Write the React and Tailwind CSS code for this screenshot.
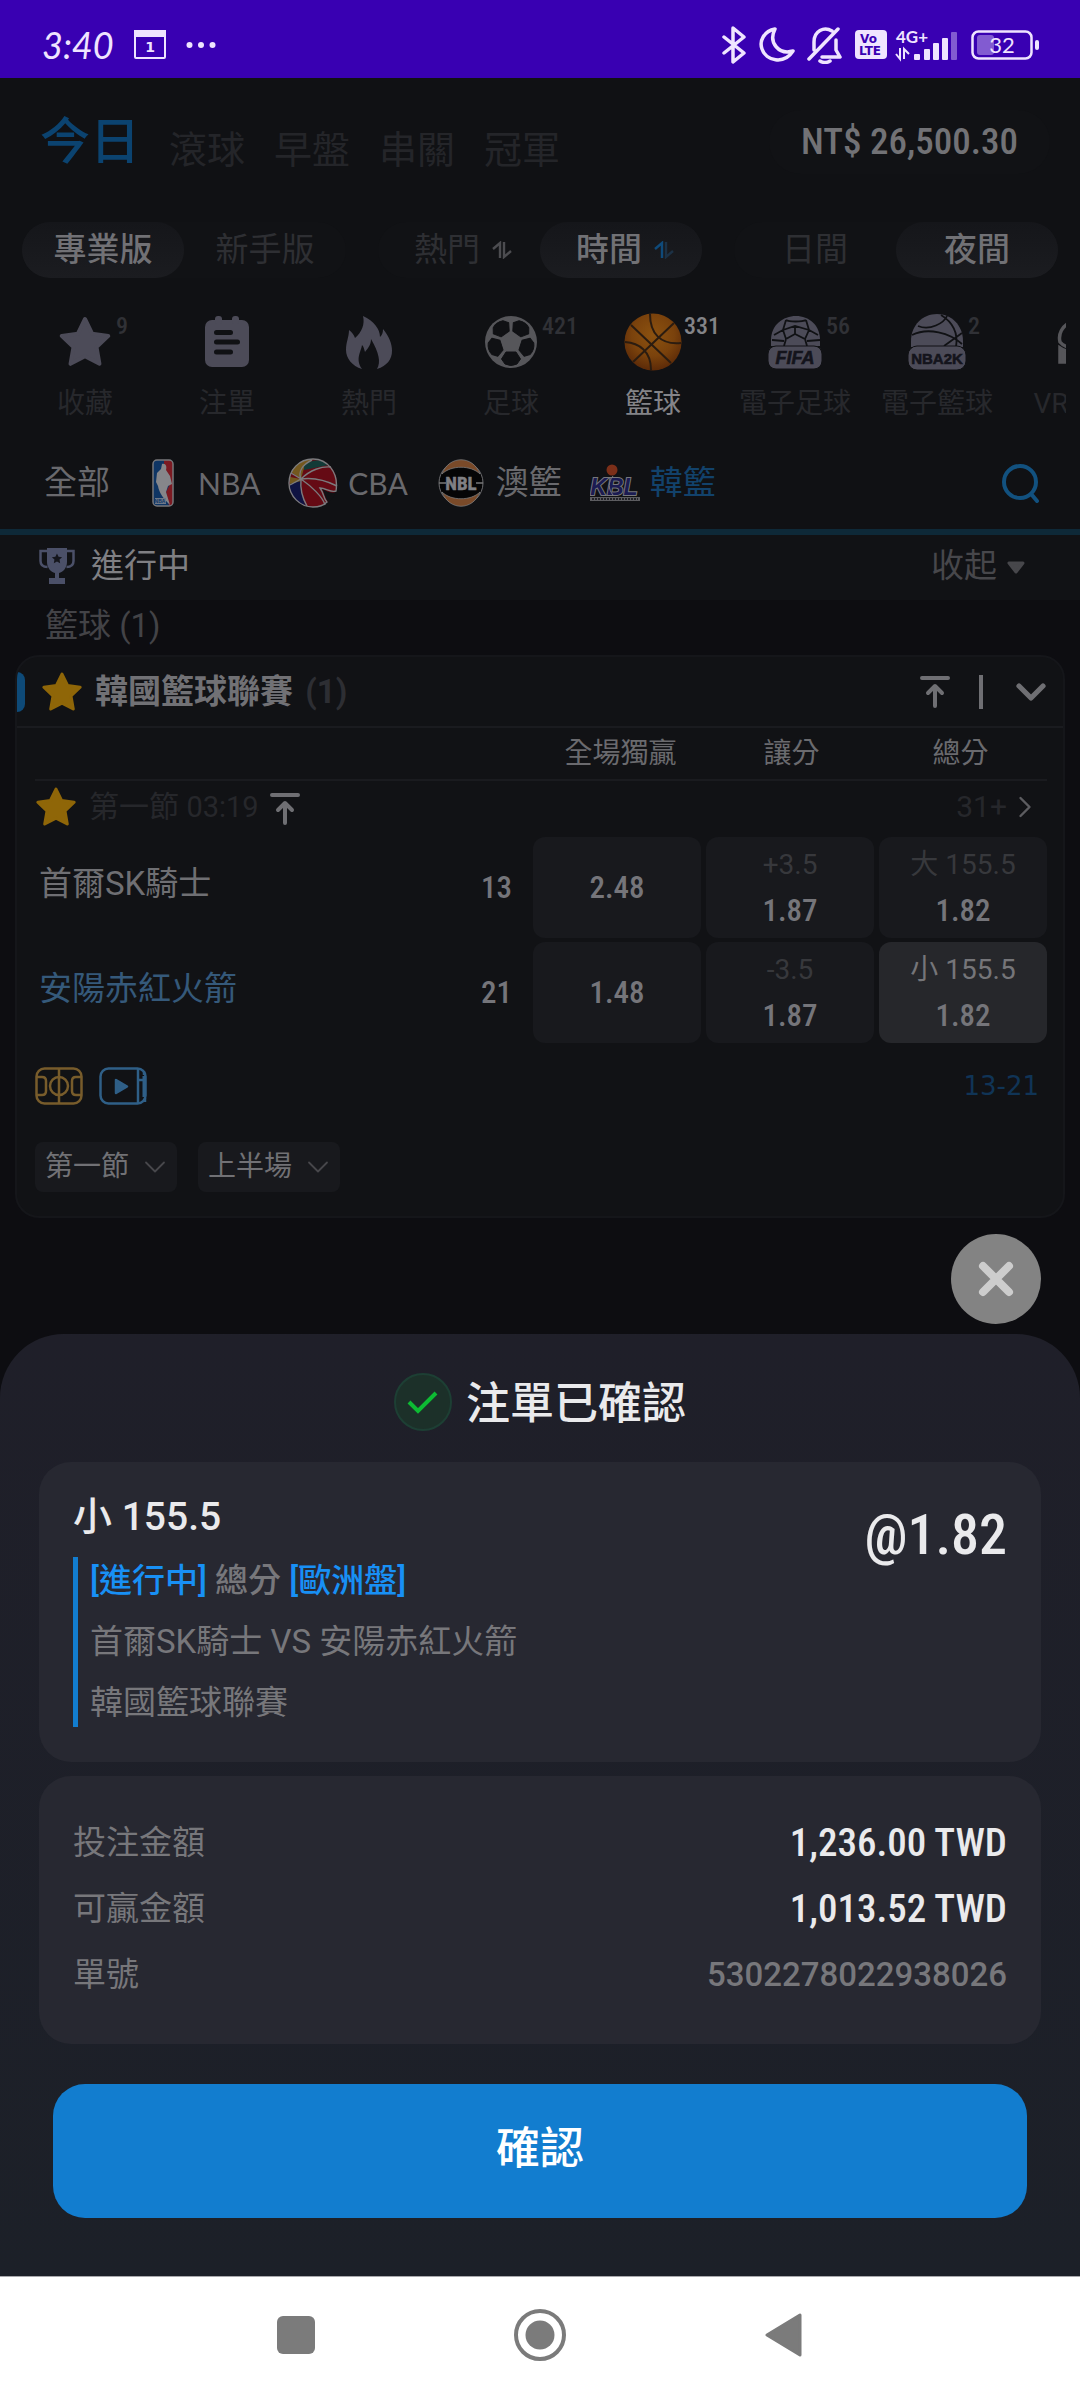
import React, { useState } from 'react';
import { ChevronDown, ChevronRight } from 'lucide-react';

const STAR = 'M12 2.6l2.9 6 6.6.9-4.8 4.6 1.2 6.8L12 17.8l-5.9 3.1 1.2-6.8L2.5 9.5l6.6-.9z';

const StarIcon = ({ className }) => (
  <svg viewBox="1 1 22 22" className={className} fill="currentColor" stroke="currentColor" strokeWidth="1.6" strokeLinejoin="round">
    <path d={STAR} />
  </svg>
);

const TopIcon = ({ className }) => (
  <svg viewBox="0 0 32 34" className={className} fill="none" stroke="currentColor" strokeWidth="4" strokeLinecap="round" strokeLinejoin="round">
    <path d="M3 3h26M16 31V12M9 18l7-7 7 7" />
  </svg>
);

const SortIcon = ({ up, down }) => (
  <svg viewBox="0 0 20 18" className="w-5 h-[18px]" fill="none" strokeWidth="2.4">
    <path d="M1 8l7-6v15" stroke={up} />
    <path d="M12 1v15l7-6" stroke={down} />
  </svg>
);

const ClipboardIcon = () => (
  <svg viewBox="0 0 44 52" className="w-[44px] h-[52px]">
    <rect x="0" y="4" width="44" height="47" rx="7" fill="#4c4b58" />
    <rect x="10" y="0" width="7" height="8" rx="3" fill="#4c4b58" />
    <rect x="27" y="0" width="7" height="8" rx="3" fill="#4c4b58" />
    <path d="M11.500 16.500h14M11.500 26h21M11.500 36h14" stroke="#101114" strokeWidth="5" strokeLinecap="round" />
  </svg>
);

const FlameIcon = () => (
  <svg viewBox="0 0 46 53" className="w-[46px] h-[53px]">
    <path
      d="M17 0C28 5 34 13 34 21C36 19 37 17 37 13C43 20 46 28 46 35C46 43 41 50 31 53C35 46 33 37 25 23C25 29 22 32 19 36C18 33 18 31 16 29C15 36 9 43 16 53C6 50 0 42 0 34C0 26 3 21 3 14C6 16 8 19 9 22C16 16 19 8 17 0Z"
      fill="#4c4b58"
    />
  </svg>
);

const SoccerIcon = () => (
  <svg viewBox="0 0 54 54" className="w-[54px] h-[54px]">
    <circle cx="27" cy="27" r="26" fill="#56565a" />
    {[0, 72, 144, 216, 288].map(angle => (
      <path key={angle} d="M22 37h10l4.500 7-3.500 5q-6 3-12 0l-3.500-5z" fill="#101114" stroke="#101114" strokeLinejoin="round" transform={`rotate(${angle} 27 27)`} />
    ))}
  </svg>
);

const BasketballIcon = () => (
  <svg viewBox="0 0 58 58" className="w-[58px] h-[58px]">
    <defs>
      <radialGradient id="ball" cx="50%" cy="38%" r="62%">
        <stop offset="0" stopColor="#8c5210" />
        <stop offset="0.6" stopColor="#7a420c" />
        <stop offset="1" stopColor="#5c2a08" />
      </radialGradient>
    </defs>
    <circle cx="29" cy="29" r="28.500" fill="url(#ball)" />
    <g fill="none" stroke="#2b1c10" strokeWidth="2">
      <path d="M7 12L47 50M50 10L9 49M26 1C26 20 36 32 57 30M1 29C15 30 27 38 27 57" />
    </g>
  </svg>
);

const FifaIcon = () => (
  <svg viewBox="0 0 54 55" className="w-[54px] h-[55px]">
    <path d="M3 31V25C3 10 15 1 28 1S52 10 52 25v6z" fill="#4c4b58" />
    <g fill="none" stroke="#101114" strokeWidth="1.8">
      <path d="M18 5c3 2 16 2 20 0M18 5l-3 10-9 5M38 5l3 10 9 5M15 15l12-4 14 4M27 11v8M15 15l3 9 9-5 10 5 4-9M18 24l-2 7M37 24l2 7M4 25l12 1M52 25l-13 1" />
    </g>
    <rect x="0" y="31" width="54" height="23" rx="8" fill="#4c4b58" stroke="#101114" />
    <text x="27" y="49" textAnchor="middle" className="font-['Liberation_Sans'] font-bold italic text-[18px]" fill="#14141c" stroke="#14141c" strokeWidth="0.6">FIFA</text>
  </svg>
);

const Nba2kIcon = () => (
  <svg viewBox="0 0 58 58" className="w-[58px] h-[58px]">
    <path d="M3 34V28C3 12 15 1 29 1S55 12 55 28v6z" fill="#4c4b58" />
    <g fill="none" stroke="#101114" strokeWidth="1.8">
      <path d="M10 13C22 18 36 10 39 3M4 22C20 14 42 20 54 31M33 2C46 10 50 22 48 34M36 33L54 20" />
    </g>
    <rect x="0" y="33" width="58" height="24" rx="9" fill="#4c4b58" stroke="#101114" />
    <text x="29" y="51" textAnchor="middle" className="font-['Liberation_Sans'] font-bold text-[15px]" fill="#14141c" stroke="#14141c" strokeWidth="0.6">NBA2K</text>
  </svg>
);

const VrIcon = () => (
  <svg viewBox="0 0 44 44" className="w-[44px] h-[44px]" fill="none" stroke="#56565a" strokeWidth="3.500">
    <path d="M14 2C5 6 1 14 3 22c4 5 12 7 19 6M14 2h16M18 12c-6-2-9 6-4 10" />
    <path d="M3 28c6 4 12 5 19 5h19v9H3z" fill="#56565a" />
  </svg>
);

const NbaLogo = () => (
  <svg viewBox="0 0 22 48" className="w-[22px] h-[48px]">
    <rect x="1" y="1" width="20" height="46" rx="4" fill="#0f3564" />
    <path d="M12 1h5q4 0 4 4v38q0 4-4 4l-3-14 4-8-6-14z" fill="#7c1a22" />
    <path d="M10 5c4-1 5 3 4 6l4 6 2 8-4 2-2 6 4 13C12 40 7 34 6 27L4 23l1-9 4-4z" fill="#86868a" />
    <rect x="1" y="1" width="20" height="46" rx="4" fill="none" stroke="#77777a" strokeWidth="1.500" />
    <rect x="3" y="39" width="11" height="6" fill="#6d7888" />
    <text x="8" y="44" textAnchor="middle" className="font-['Liberation_Sans'] font-bold text-[5px]" fill="#0f3564">NBA</text>
  </svg>
);

const CbaLogo = () => (
  <svg viewBox="0 0 50 50" className="w-[50px] h-[50px]">
    <circle cx="25" cy="25" r="24" fill="#650a14" />
    <path d="M13 21L3 14C8 5 16 1 25 1l-9 9z" fill="#73581f" />
    <path d="M16 8C22 1 34 0 41 7L16 12z" fill="#123a37" />
    <path d="M2 19l11 2-1 8-10 2z" fill="#73581f" />
    <path d="M2 26l11-3c0 12 2 19 5 25C7 44 1 37 2 26z" fill="#0f1342" />
    <g fill="none" stroke="#7b7b7e" strokeWidth="1.4">
      <path d="M13 21C22 12 34 8 43 9M13 21c14-2 26 2 36 7M13 21c10 7 22 18 24 26M13 21c-1 10 2 20 6 27M13 21L3 15M13 21C10 14 14 7 24 2M2 27l11-6" />
      <path d="M32 30c6 0 11 5 16 3C51 14 39 1 25 1 11 1 1 12 1 25s11 24 24 24c6 0 11-2 14-5-4-4-2-7-7-14z" />
    </g>
    <path d="M34 31c5 2 9 5 14 3-2 5-5 8-8 10-3-4-3-8-6-13z" fill="#101114" />
  </svg>
);

const NblLogo = () => (
  <svg viewBox="0 0 46 48" className="w-[46px] h-[48px]">
    <circle cx="23" cy="24" r="22" fill="#050506" stroke="#6d6d70" />
    <path d="M4 15C11 -4 35 -4 42 15C33 6 13 6 4 15zM4 33c7 19 31 19 38 0-9 9-29 9-38 0z" fill="#7a4a29" stroke="#78787a" strokeWidth="0.8" />
    <path d="M1 24h7M38 24h7" stroke="#78787a" strokeWidth="1.5" />
    <text x="23" y="31" textAnchor="middle" className="font-['Roboto_Condensed','Roboto'] font-bold text-[19px]" fill="#808084" stroke="#808084" strokeWidth="0.5">NBL</text>
  </svg>
);

const KblLogo = () => (
  <svg viewBox="0 0 50 38" className="w-[50px] h-[38px]">
    <text x="24" y="31" textAnchor="middle" className="font-['Liberation_Sans'] font-bold italic text-[23px]" fill="#1b1b52" stroke="#77777c" strokeWidth="2" paintOrder="stroke">KBL</text>
    <path d="M23 12c-5 6-5 13 0 19" fill="none" stroke="#7a7a7e" />
    <circle cx="22" cy="6" r="5.500" fill="#7c2f19" />
    <rect x="0" y="33" width="50" height="4" fill="#5c5c60" />
    <path d="M2 35h46" stroke="#222228" strokeWidth="2" strokeDasharray="2 1" />
  </svg>
);

const TrophyIcon = () => (
  <svg viewBox="0 0 36 38" className="w-9 h-[38px]">
    <path d="M8 1h20v14c0 6-4 10-8 11v5h6v6H10v-6h6v-5c-4-1-8-5-8-11z" fill="#4b5068" />
    <path d="M8 4H1.500v10c0 4 3 6 7 6M28 4h6.500v10c0 4-3 6-7 6" fill="none" stroke="#4b5068" strokeWidth="2.5" />
    <path d={STAR} transform="translate(11.500 5) scale(0.54)" fill="#15161c" />
  </svg>
);

const StatusBar = () => (
  <div className="flex items-center justify-between h-[78px] pt-3 pl-[42px] pr-[41px] bg-[#3900b2] text-[#efe4ff]">
    <div className="flex items-center gap-5">
      <span className="font-['Lato',sans-serif] italic text-[36px] leading-10">3:40</span>
      <svg viewBox="0 0 32 30" className="w-8 h-[30px]">
        <rect x="1" y="1" width="30" height="27" rx="1" fill="none" stroke="currentColor" strokeWidth="2" />
        <rect x="0" y="0" width="32" height="7" fill="currentColor" />
        <text x="16" y="22" textAnchor="middle" className="font-['DejaVu_Sans'] font-bold text-[14px]" fill="currentColor">1</text>
      </svg>
      <svg viewBox="0 0 30 8" className="w-[30px] h-2" fill="currentColor">
        <circle cx="3.500" cy="4" r="3" />
        <circle cx="15" cy="4" r="3" />
        <circle cx="26.500" cy="4" r="3" />
      </svg>
    </div>
    <div className="flex items-center gap-3">
      <svg viewBox="0 0 26 38" className="w-[26px] h-[38px]" fill="none" stroke="currentColor" strokeWidth="3.500" strokeLinejoin="round" strokeLinecap="round">
        <path d="M3 11l20 16-11 9V2l11 9L3 27" />
      </svg>
      <svg viewBox="0 0 36 36" className="w-9 h-9" fill="none" stroke="currentColor" strokeWidth="3.500" strokeLinejoin="round">
        <path d="M16 2C5 4 0 14 3 22c4 12 22 16 31 2C20 28 9 16 16 2z" />
      </svg>
      <svg viewBox="0 0 36 38" className="w-9 h-[38px]" fill="none" stroke="currentColor" strokeWidth="3.500" strokeLinecap="round" strokeLinejoin="round">
        <path d="M2 33L31 3M7 24V16C7 5 17 0 25 5M29 14v10l4 7H15" />
        <path d="M13 35q5 3 10 0" />
      </svg>
      <svg viewBox="0 0 32 30" className="w-8 h-[30px]">
        <rect width="32" height="29" rx="4" fill="currentColor" />
        <g className="font-['DejaVu_Sans'] font-bold text-[12px]" fill="#3900b2">
          <text x="5" y="13">Vo</text>
          <text x="4" y="25">LTE</text>
        </g>
      </svg>
      <svg viewBox="0 0 64 40" className="w-16 h-10 -ml-1" fill="currentColor">
        <text x="1" y="18" className="font-['Lato'] font-bold text-[17px]">4G+</text>
        <path d="M5 23v11l-4-5M9 34V24l5 5" fill="none" stroke="currentColor" strokeWidth="2" />
        <rect x="19" y="29" width="6" height="6" rx="1" />
        <rect x="29" y="24" width="6" height="11" rx="1" />
        <rect x="38" y="18" width="6" height="17" rx="1" />
        <rect x="47" y="13" width="6" height="22" rx="1" />
        <rect x="56" y="7" width="6" height="28" rx="1" opacity="0.4" />
      </svg>
      <svg viewBox="0 0 68 30" className="w-[68px] h-[30px]">
        <rect x="1.500" y="1.500" width="59" height="27" rx="6" fill="none" stroke="currentColor" strokeWidth="2.500" />
        <rect x="6" y="5" width="17" height="20" rx="3" fill="currentColor" opacity="0.4" />
        <rect x="64" y="10" width="4" height="10" rx="2" fill="currentColor" />
        <text x="31" y="23" textAnchor="middle" className="font-['Lato'] text-[22px]" fill="currentColor">32</text>
      </svg>
    </div>
  </div>
);

const Segment = ({ options, value, onChange }) => (
  <div className="flex flex-1 h-14 rounded-full bg-[#111215]">
    {options.map(option => (
      <button
        key={option.label}
        onClick={() => onChange(option.label)}
        className={`flex flex-1 items-center justify-center gap-3 rounded-full text-[33px] leading-10 ${option.icon ? 'pl-2' : ''} ${
          value === option.label ? 'bg-linear-to-b from-[#15161a] to-[#1b1c20] text-[#717175] font-medium' : 'text-[#2e2f33]'
        }`}
      >
        {option.label}
        {option.icon}
      </button>
    ))}
  </div>
);

const days = ['今日', '滾球', '早盤', '串關', '冠軍'];

const sports = [
  { name: '收藏', count: 9, icon: <StarIcon className="w-[54px] h-[54px] text-[#4c4b58]" /> },
  { name: '注單', icon: <ClipboardIcon /> },
  { name: '熱門', icon: <FlameIcon /> },
  { name: '足球', count: 421, icon: <SoccerIcon /> },
  { name: '籃球', count: 331, icon: <BasketballIcon /> },
  { name: '電子足球', count: 56, icon: <FifaIcon /> },
  { name: '電子籃球', count: 2, icon: <Nba2kIcon /> },
  { name: 'VR足球', icon: <VrIcon /> },
];

const leagues = [
  { name: '全部' },
  { name: 'NBA', logo: <NbaLogo /> },
  { name: 'CBA', logo: <CbaLogo /> },
  { name: '澳籃', logo: <NblLogo /> },
  { name: '韓籃', logo: <KblLogo /> },
];

const teams = [
  { name: '首爾SK騎士', score: 13, odds: [{ price: '2.48' }, { line: '+3.5', price: '1.87' }, { line: '大 155.5', price: '1.82' }] },
  { name: '安陽赤紅火箭', score: 21, odds: [{ price: '1.48' }, { line: '-3.5', price: '1.87' }, { line: '小 155.5', price: '1.82', picked: true }] },
];

const NARROW = "font-['Roboto_Condensed','Liberation_Sans_Narrow','Roboto',sans-serif] font-medium";

const Header = () => {
  const [day, setDay] = useState('今日');
  const [version, setVersion] = useState('專業版');
  const [sort, setSort] = useState('時間');
  const [theme, setTheme] = useState('夜間');
  const [sport, setSport] = useState('籃球');
  const [league, setLeague] = useState('韓籃');

  return (
    <header className="bg-[#101114] border-b-[6px] border-[#0e2938]">
      <div className="flex items-center justify-between h-32 pl-10 pr-[30px]">
        <nav className="flex items-end gap-[29px]">
          {days.map(d => (
            <button
              key={d}
              onClick={() => setDay(d)}
              className={day === d ? 'text-[50px] leading-[60px] font-medium text-[#0b4370]' : 'text-[38px] leading-[44px] text-[#242529]'}
            >
              {d}
            </button>
          ))}
        </nav>
        <div className={`px-8 rounded-full bg-[#111215] text-[37px] leading-[64px] text-[#727276] ${NARROW}`}>
          NT$ 26,500.30
        </div>
      </div>

      <div className="flex gap-8 mt-4 px-[22px]">
        <Segment value={version} onChange={setVersion} options={[{ label: '專業版' }, { label: '新手版' }]} />
        <Segment
          value={sort}
          onChange={setSort}
          options={[
            { label: '熱門', icon: <SortIcon up="#4c4c50" down="#4c4c50" /> },
            { label: '時間', icon: <SortIcon up="#0f4a7a" down="#1c3145" /> },
          ]}
        />
        <Segment value={theme} onChange={setTheme} options={[{ label: '日間' }, { label: '夜間' }]} />
      </div>

      {/* Sports */}
      <div className="flex mx-[14px] mt-8 overflow-hidden">
        {sports.map(s => (
          <button
            key={s.name}
            onClick={() => setSport(s.name)}
            className={`relative flex flex-col items-center shrink-0 w-[142px] ${sport === s.name ? 'text-[#848488]' : 'text-[#27282c]'}`}
          >
            <span className="flex items-center justify-center h-16">{s.icon}</span>
            {s.count && (
              <span className={`absolute left-[102px] top-[2px] text-[24px] leading-7 ${NARROW} ${sport === s.name ? '' : 'text-[#303136]'}`}>
                {s.count}
              </span>
            )}
            <span className="mt-[10px] text-[28px] leading-10 whitespace-nowrap">{s.name}</span>
          </button>
        ))}
      </div>

      {/* Leagues */}
      <div className="flex items-center justify-between h-[88px] mt-[17px] pb-1 pl-11 pr-10">
        <nav className="flex items-center gap-7">
          {leagues.map(l => (
            <button
              key={l.name}
              onClick={() => setLeague(l.name)}
              className={`flex items-center gap-[10px] text-[33px] leading-10 ${league === l.name ? 'text-[#12426b]' : 'text-[#69696d]'}`}
            >
              {l.logo && <span className="flex justify-center w-[50px]">{l.logo}</span>}
              {l.name.endsWith('BA') ? <span className="font-['Lato',sans-serif] text-[30px]">{l.name}</span> : l.name}
            </button>
          ))}
        </nav>
        <button aria-label="search">
          <svg viewBox="0 0 38 40" className="w-[38px] h-10" fill="none" stroke="#12517f" strokeWidth="4" strokeLinecap="round">
            <circle cx="18" cy="19" r="16" />
            <path d="M30 32l5 6" />
          </svg>
        </button>
      </div>
    </header>
  );
};

const OddsButton = ({ odd }) => (
  <button
    className={`flex flex-col items-center justify-center gap-[10px] w-full h-[101px] rounded-xl ${
      odd.picked ? 'bg-[#26272b]' : 'bg-[#18191d]'
    }`}
  >
    {odd.line && (
      <span className={`text-[28px] leading-9 ${odd.picked ? 'text-[#757579]' : 'text-[#37383c]'}`}>{odd.line}</span>
    )}
    <span className={`text-[31px] leading-9 text-[#75757a] ${NARROW}`}>{odd.price}</span>
  </button>
);

const MatchCard = () => (
  <section className="mx-[15px] border-2 border-[#15161a] rounded-3xl bg-[#111215] overflow-hidden">
    <div className="flex items-center h-[71px] pr-2 border-b-2 border-[#1a1b1f]">
      <span className="w-2 h-10 rounded-r-lg bg-[#0e4a78]" />
      <StarIcon className="ml-4 w-[42px] h-[42px] text-[#8f6608]" />
      <h2 className="ml-3 text-[33px] leading-10 font-bold text-[#717175]">
        韓國籃球聯賽 <span className="ml-1 text-[#2d2e33]">(1)</span>
      </h2>
      <div className="flex items-center ml-auto text-[#6f6f73]">
        <button aria-label="top"><TopIcon className="w-8 h-[34px]" /></button>
        <span className="ml-7 w-1 h-[34px] bg-current" />
        <button aria-label="collapse" className="ml-6"><ChevronDown className="w-12 h-12" strokeWidth="2.6" /></button>
      </div>
    </div>

    <div className="pl-[18px] pr-4">
      <table className="w-full table-fixed border-collapse">
        <colgroup>
          <col />
          <col className="w-[80px]" />
          <col className="w-[173px]" />
          <col className="w-[173px]" />
          <col className="w-[173px]" />
        </colgroup>
        <thead>
          <tr className="h-[52px] border-b-2 border-[#1a1b1f] text-[28px] leading-9 text-[#6a6a6e]">
            <th colSpan="2" />
            <th className="font-normal pl-3">全場獨贏</th>
            <th className="font-normal pl-2">讓分</th>
            <th className="font-normal">總分</th>
          </tr>
        </thead>
        <tbody>
          <tr>
            <td colSpan="5" className="p-0">
              <div className="flex items-center h-14 pb-1 text-[30px] leading-9 text-[#26272b]">
                <StarIcon className="w-[42px] h-[42px] text-[#8f6608]" />
                <span className="ml-3">第一節 <span className="text-[29px]">03:19</span></span>
                <TopIcon className="ml-[10px] mt-1 w-8 h-[34px] text-[#6f6f73]" />
                <button className="flex items-center ml-auto mr-1">
                  31+
                  <ChevronRight className="w-9 h-9 text-[#5c5c60]" strokeWidth="1.6" />
                </button>
              </div>
            </td>
          </tr>
          {teams.map((team, i) => (
            <tr key={team.name}>
              <th className={`pl-1 pb-3 text-left font-normal text-[33px] leading-10 ${i === 1 ? 'text-[#35597a]' : 'text-[#6f6f73]'}`}>{team.name}</th>
              <td className={`pr-4 pb-1 text-right text-[31px] leading-10 text-[#75757a] ${NARROW}`}>{team.score}</td>
              {team.odds.map((odd, j) => (
                <td key={j} className="p-0 pl-[5px] pb-1">
                  <OddsButton odd={odd} />
                </td>
              ))}
            </tr>
          ))}
        </tbody>
      </table>

      <div className="flex items-center gap-4 mt-5">
        <svg viewBox="0 0 48 38" className="w-12 h-[38px]" fill="none" stroke="#785c2b" strokeWidth="2.500">
          <rect x="1.500" y="1.500" width="45" height="35" rx="8" />
          <circle cx="24" cy="19" r="9" />
          <path d="M24 1v36M2 10h5q4 0 4 4v10q0 4-4 4H2M46 10h-5q-4 0-4 4v10q0 4 4 4h5" />
        </svg>
        <svg viewBox="0 0 48 38" className="w-12 h-[38px]" fill="none" stroke="#2f5f87" strokeWidth="2.500">
          <rect x="1.500" y="1.500" width="45" height="35" rx="8" />
          <path d="M39 2v34M46 13h-7M45 4v4M46 31v4" />
          <path d="M45 9v21" strokeWidth="3" />
          <path d="M17 13v13l11-6.500z" fill="#2f5f87" strokeLinejoin="round" />
        </svg>
        <span className="ml-auto mr-2 font-['DejaVu_Sans',sans-serif] text-[26px] leading-9 text-[#103456]">13-21</span>
      </div>

      <div className="flex gap-[21px] mt-[37px] mb-6">
        {['第一節', '上半場'].map(part => (
          <button key={part} className="flex items-center gap-2 h-[50px] pl-[10px] pr-1 rounded-lg bg-[#18191d] text-[28px] leading-9 text-[#717175]">
            {part}
            <ChevronDown className="w-9 h-9 text-[#47474b]" strokeWidth="1.2" />
          </button>
        ))}
      </div>
    </div>
  </section>
);

const BetSlip = () => (
  <section className="flex flex-col flex-1 px-[39px] rounded-t-[64px] bg-linear-to-b from-[#1f1f29] to-[#1c2028]">
    <div className="flex items-center justify-center gap-[14px] h-32 pt-2">
      <svg viewBox="0 0 58 58" className="w-[58px] h-[58px]">
        <circle cx="29" cy="29" r="28" fill="#1c3029" stroke="#1d3f34" strokeWidth="2" />
        <path d="M15 29l9 9 18-18" fill="none" stroke="#0dbb33" strokeWidth="4" />
      </svg>
      <h1 className="pt-1 text-[44px] leading-[56px] font-medium text-[#eaeaec]">注單已確認</h1>
    </div>

    <div className="flex items-start justify-between h-[300px] px-[34px] pt-[29px] rounded-[32px] bg-[#272831]">
      <div>
        <p className="text-[39px] leading-[52px] font-medium text-[#eaeaec]">小 155.5</p>
        <div className="flex flex-col gap-[13px] mt-[14px] pl-3 border-l-[5px] border-[#127dcf] text-[33px] leading-[48px] text-[#77777b]">
          <p className="font-medium">
            <span className="text-[#1890f5]">[進行中]</span> 總分 <span className="text-[#1890f5]">[歐洲盤]</span>
          </p>
          <p>首爾SK騎士 VS 安陽赤紅火箭</p>
          <p>韓國籃球聯賽</p>
        </div>
      </div>
      <p className={`mt-2 text-[56px] leading-[72px] text-[#eaeaec] ${NARROW}`}>@1.82</p>
    </div>

    <dl className="flex flex-col gap-[18px] h-[268px] mt-[14px] px-[34px] pt-[43px] rounded-[32px] bg-[#272831] text-[33px] leading-[48px] text-[#77777b]">
      <div className="flex items-center justify-between">
        <dt>投注金額</dt>
        <dd className={`text-[39px] text-[#eaeaec] ${NARROW}`}>1,236.00 TWD</dd>
      </div>
      <div className="flex items-center justify-between">
        <dt>可贏金額</dt>
        <dd className={`text-[39px] text-[#eaeaec] ${NARROW}`}>1,013.52 TWD</dd>
      </div>
      <div className="flex items-center justify-between">
        <dt>單號</dt>
        <dd className="font-medium">5302278022938026</dd>
      </div>
    </dl>

    <button className="h-[134px] mx-[14px] mt-10 mb-[58px] pb-1 rounded-[32px] bg-[#127dcf] text-[44px] leading-[56px] font-medium text-white">
      確認
    </button>
  </section>
);

const NavBar = () => (
  <nav className="flex items-center justify-around h-[126px] px-[178px] pb-[10px] border-t border-[#a8a8ac] bg-white">
    <button aria-label="recent" className="w-[38px] h-[38px] rounded-md bg-[#7b7b7b]" />
    <button aria-label="home">
      <svg viewBox="0 0 52 52" className="w-[52px] h-[52px]">
        <circle cx="26" cy="26" r="24" fill="none" stroke="#7b7b7b" strokeWidth="4" />
        <circle cx="26" cy="26" r="14.500" fill="#7b7b7b" />
      </svg>
    </button>
    <button aria-label="back">
      <svg viewBox="0 0 38 44" className="w-[38px] h-11">
        <path d="M35 2v40L2 22z" fill="#7b7b7b" stroke="#7b7b7b" strokeWidth="3" strokeLinejoin="round" />
      </svg>
    </button>
  </nav>
);

export default function App() {
  return (
    <div className="flex flex-col min-h-screen bg-[#0d0d11] font-['Roboto','Noto_Sans_CJK_TC',sans-serif]">
      <StatusBar />
      <Header />
      <div className="flex items-center h-[65px] pl-[39px] pr-[55px] pb-1 bg-[#111215] text-[33px] leading-10">
        <TrophyIcon />
        <span className="ml-4 text-[#7f7f83]">進行中</span>
        <button className="flex items-center gap-[10px] ml-auto text-[#47474b]">
          收起
          <svg viewBox="0 0 18 14" className="w-[18px] h-[14px] mt-1">
            <path d="M2 2h14l-7 9z" fill="currentColor" stroke="currentColor" strokeWidth="3" strokeLinejoin="round" />
          </svg>
        </button>
      </div>
      <p className="h-[55px] pl-[45px] text-[33px] leading-[52px] text-[#434347]">籃球 (1)</p>
      <MatchCard />
      <button aria-label="close" className="flex items-center justify-center self-end w-[90px] h-[90px] mt-4 mb-[10px] mr-[39px] rounded-full bg-[#838383]">
        <svg viewBox="0 0 36 36" className="w-9 h-9" stroke="#cdcdcd" strokeWidth="8" strokeLinecap="round">
          <path d="M5 5l26 26M31 5L5 31" />
        </svg>
      </button>
      <BetSlip />
      <NavBar />
    </div>
  );
}
